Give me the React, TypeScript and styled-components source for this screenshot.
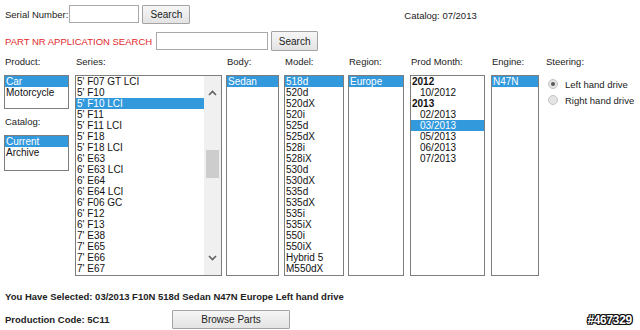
import React from 'react';
import styled, { createGlobalStyle } from 'styled-components';

const GlobalStyle = createGlobalStyle`
  html, body {
    margin: 0;
    padding: 0;
    background: #fff;
  }
  body {
    font-family: 'Liberation Sans', Arial, sans-serif;
    font-size: 9.5px;
    color: #222;
  }
`;

const Page = styled.div`
  position: relative;
  width: 640px;
  height: 330px;
  padding: 4px 0 0 4px;
  box-sizing: border-box;
  overflow: hidden;
`;

const Row = styled.div<{ $top?: number }>`
  display: flex;
  align-items: center;
  margin-top: ${p => p.$top || 0}px;
  height: 20px;
`;

const Label = styled.span<{ $red?: boolean }>`
  padding-left: 1px;
  color: ${p => (p.$red ? '#e0292b' : '#222')};
  white-space: nowrap;
`;

const TextInput = styled.input<{ $w: number; $gap: number }>`
  width: ${p => p.$w}px;
  height: 18px;
  margin: 0 0 0 ${p => p.$gap}px;
  box-sizing: border-box;
  border: 1px solid #a9a9a9;
  padding: 0 2px;
  font: inherit;
  background: #fff;
`;

const Button = styled.button<{ $w: number; $h?: number; $gap?: number }>`
  width: ${p => p.$w}px;
  height: ${p => p.$h || 19}px;
  margin: 0 0 0 ${p => p.$gap || 0}px;
  box-sizing: border-box;
  border: 1px solid #a3a3a3;
  border-radius: 1px;
  background: linear-gradient(#f6f6f6, #e3e3e3);
  font: inherit;
  font-size: 10px;
  color: #222;
  padding: 0;
`;

const Catalog = styled.span`
  margin-left: 214px;
  margin-top: 2px;
`;

const Columns = styled.div`
  display: flex;
  align-items: flex-start;
  margin-top: 5px;
`;

const Column = styled.div<{ $w: number; $gap?: number }>`
  width: ${p => p.$w}px;
  margin-left: ${p => p.$gap || 0}px;
  display: flex;
  flex-direction: column;
`;

const Heading = styled.div<{ $top?: number }>`
  height: 12px;
  line-height: 12px;
  padding-left: 1px;
  margin-top: ${p => p.$top || 0}px;
  margin-bottom: 7px;
  white-space: nowrap;
`;

const ListBox = styled.div<{ $h: number }>`
  display: flex;
  height: ${p => p.$h}px;
  box-sizing: border-box;
  border: 1px solid #7d7d7d;
  background: #fff;
  overflow: hidden;
`;

const Options = styled.div`
  flex: 1;
  display: flex;
  flex-direction: column;
  min-width: 0;
`;

const Option = styled.div<{ $sel?: boolean; $group?: boolean; $indent?: boolean }>`
  height: 11px;
  line-height: 11px;
  padding-left: ${p => (p.$indent ? 9 : 1)}px;
  white-space: nowrap;
  font-size: 10px;
  font-weight: ${p => (p.$group ? 'bold' : 'normal')};
  color: ${p => (p.$sel ? '#fff' : '#111')};
  background: ${p => (p.$sel ? '#3399dd' : 'transparent')};
`;

const Track = styled.div`
  width: 17px;
  background: #f0f0f0;
  display: flex;
  flex-direction: column;
  align-items: center;
`;

const ArrowBox = styled.div`
  height: 34px;
  display: flex;
  align-items: center;
  justify-content: center;
`;

const Thumb = styled.div`
  width: 13px;
  height: 28px;
  margin-top: 40px;
  background: #cdcdcd;
`;

const Spacer = styled.div`
  flex: 1;
`;

const Radios = styled.div`
  display: flex;
  flex-direction: column;
  gap: 4px;
  margin-top: 3px;
  padding-left: 3px;
`;

const RadioRow = styled.div`
  display: flex;
  align-items: center;
  height: 12px;
`;

const RadioDot = styled.span<{ $on?: boolean }>`
  width: 10px;
  height: 10px;
  box-sizing: border-box;
  border-radius: 50%;
  border: 1px solid #c4c4c4;
  background: #e4e4e4;
  margin-right: 7px;
  display: flex;
  align-items: center;
  justify-content: center;
  &::after {
    content: '';
    width: 4px;
    height: 4px;
    border-radius: 50%;
    background: ${p => (p.$on ? '#5a5a5a' : 'transparent')};
  }
`;

const Summary = styled.div`
  margin-top: 15px;
  height: 12px;
  line-height: 12px;
  padding-left: 1px;
  font-weight: bold;
`;

const CodeRow = styled.div`
  display: flex;
  align-items: center;
  margin-top: 7px;
  height: 19px;
`;

const CodeText = styled.span`
  width: 167px;
  padding-left: 1px;
  font-weight: bold;
`;

const Watermark = styled.div`
  position: absolute;
  right: 8px;
  bottom: 3px;
  font-family: 'Liberation Sans', Arial, sans-serif;
  font-weight: bold;
  font-size: 12px;
  letter-spacing: -0.3px;
  color: #fff;
  text-shadow: -1px 0 #111, 1px 0 #111, 0 -1px #111, 0 1px #111,
    -1px -1px #111, 1px 1px #111, -1px 1px #111, 1px -1px #111;
`;

const Chevron = ({ up }: { up?: boolean }) => (
  <svg width='9' height='6' viewBox='0 0 9 6'>
    <path
      d={up ? 'M1 5 L4.5 1.5 L8 5' : 'M1 1 L4.5 4.5 L8 1'}
      fill='none'
      stroke='#606060'
      strokeWidth='1.6'
    />
  </svg>
);

const series = [
  "5' F07 GT LCI", "5' F10", "5' F10 LCI", "5' F11", "5' F11 LCI", "5' F18",
  "5' F18 LCI", "6' E63", "6' E63 LCI", "6' E64", "6' E64 LCI", "6' F06 GC",
  "6' F12", "6' F13", "7' E38", "7' E65", "7' E66", "7' E67",
];

const models = [
  '518d', '520d', '520dX', '520i', '525d', '525dX', '528i', '528iX', '530d',
  '530dX', '535d', '535dX', '535i', '535iX', '550i', '550iX', 'Hybrid 5', 'M550dX',
];

const months: { text: string; group?: boolean }[] = [
  { text: '2012', group: true },
  { text: '10/2012' },
  { text: '2013', group: true },
  { text: '02/2013' },
  { text: '03/2013' },
  { text: '05/2013' },
  { text: '06/2013' },
  { text: '07/2013' },
];

const App = () => (
  <>
    <GlobalStyle />
    <Page>
      <Row>
        <Label>Serial Number:</Label>
        <TextInput $w={70} $gap={1} />
        <Button $w={48} $gap={3}>Search</Button>
        <Catalog>Catalog: 07/2013</Catalog>
      </Row>
      <Row $top={7}>
        <Label $red>PART NR APPLICATION SEARCH</Label>
        <TextInput $w={112} $gap={4} />
        <Button $w={47} $h={20} $gap={3}>Search</Button>
      </Row>

      <Columns>
        <Column $w={65}>
          <Heading>Product:</Heading>
          <ListBox $h={34}>
            <Options>
              <Option $sel>Car</Option>
              <Option>Motorcycle</Option>
            </Options>
          </ListBox>
          <Heading $top={7}>Catalog:</Heading>
          <ListBox $h={36}>
            <Options>
              <Option $sel>Current</Option>
              <Option>Archive</Option>
            </Options>
          </ListBox>
        </Column>

        <Column $w={147} $gap={6}>
          <Heading>Series:</Heading>
          <ListBox $h={201}>
            <Options>
              {series.map(s => (
                <Option key={s} $sel={s === "5' F10 LCI"}>{s}</Option>
              ))}
            </Options>
            <Track>
              <ArrowBox><Chevron up /></ArrowBox>
              <Thumb />
              <Spacer />
              <ArrowBox><Chevron /></ArrowBox>
            </Track>
          </ListBox>
        </Column>

        <Column $w={53} $gap={4}>
          <Heading>Body:</Heading>
          <ListBox $h={201}>
            <Options>
              <Option $sel>Sedan</Option>
            </Options>
          </ListBox>
        </Column>

        <Column $w={60} $gap={5}>
          <Heading>Model:</Heading>
          <ListBox $h={201}>
            <Options>
              {models.map(m => (
                <Option key={m} $sel={m === '518d'}>{m}</Option>
              ))}
            </Options>
          </ListBox>
        </Column>

        <Column $w={56} $gap={4}>
          <Heading>Region:</Heading>
          <ListBox $h={201}>
            <Options>
              <Option $sel>Europe</Option>
            </Options>
          </ListBox>
        </Column>

        <Column $w={75} $gap={6}>
          <Heading>Prod Month:</Heading>
          <ListBox $h={201}>
            <Options>
              {months.map(m => (
                <Option
                  key={m.text}
                  $group={m.group}
                  $indent={!m.group}
                  $sel={m.text === '03/2013'}
                >
                  {m.text}
                </Option>
              ))}
            </Options>
          </ListBox>
        </Column>

        <Column $w={48} $gap={6}>
          <Heading>Engine:</Heading>
          <ListBox $h={201}>
            <Options>
              <Option $sel>N47N</Option>
            </Options>
          </ListBox>
        </Column>

        <Column $w={95} $gap={6}>
          <Heading>Steering:</Heading>
          <Radios>
            <RadioRow>
              <RadioDot $on />
              <span>Left hand drive</span>
            </RadioRow>
            <RadioRow>
              <RadioDot />
              <span>Right hand drive</span>
            </RadioRow>
          </Radios>
        </Column>
      </Columns>

      <Summary>You Have Selected: 03/2013 F10N 518d Sedan N47N Europe Left hand drive</Summary>
      <CodeRow>
        <CodeText>Production Code: 5C11</CodeText>
        <Button $w={118} $h={19}>Browse Parts</Button>
      </CodeRow>

      <Watermark>#467329</Watermark>
    </Page>
  </>
);

export default App;
